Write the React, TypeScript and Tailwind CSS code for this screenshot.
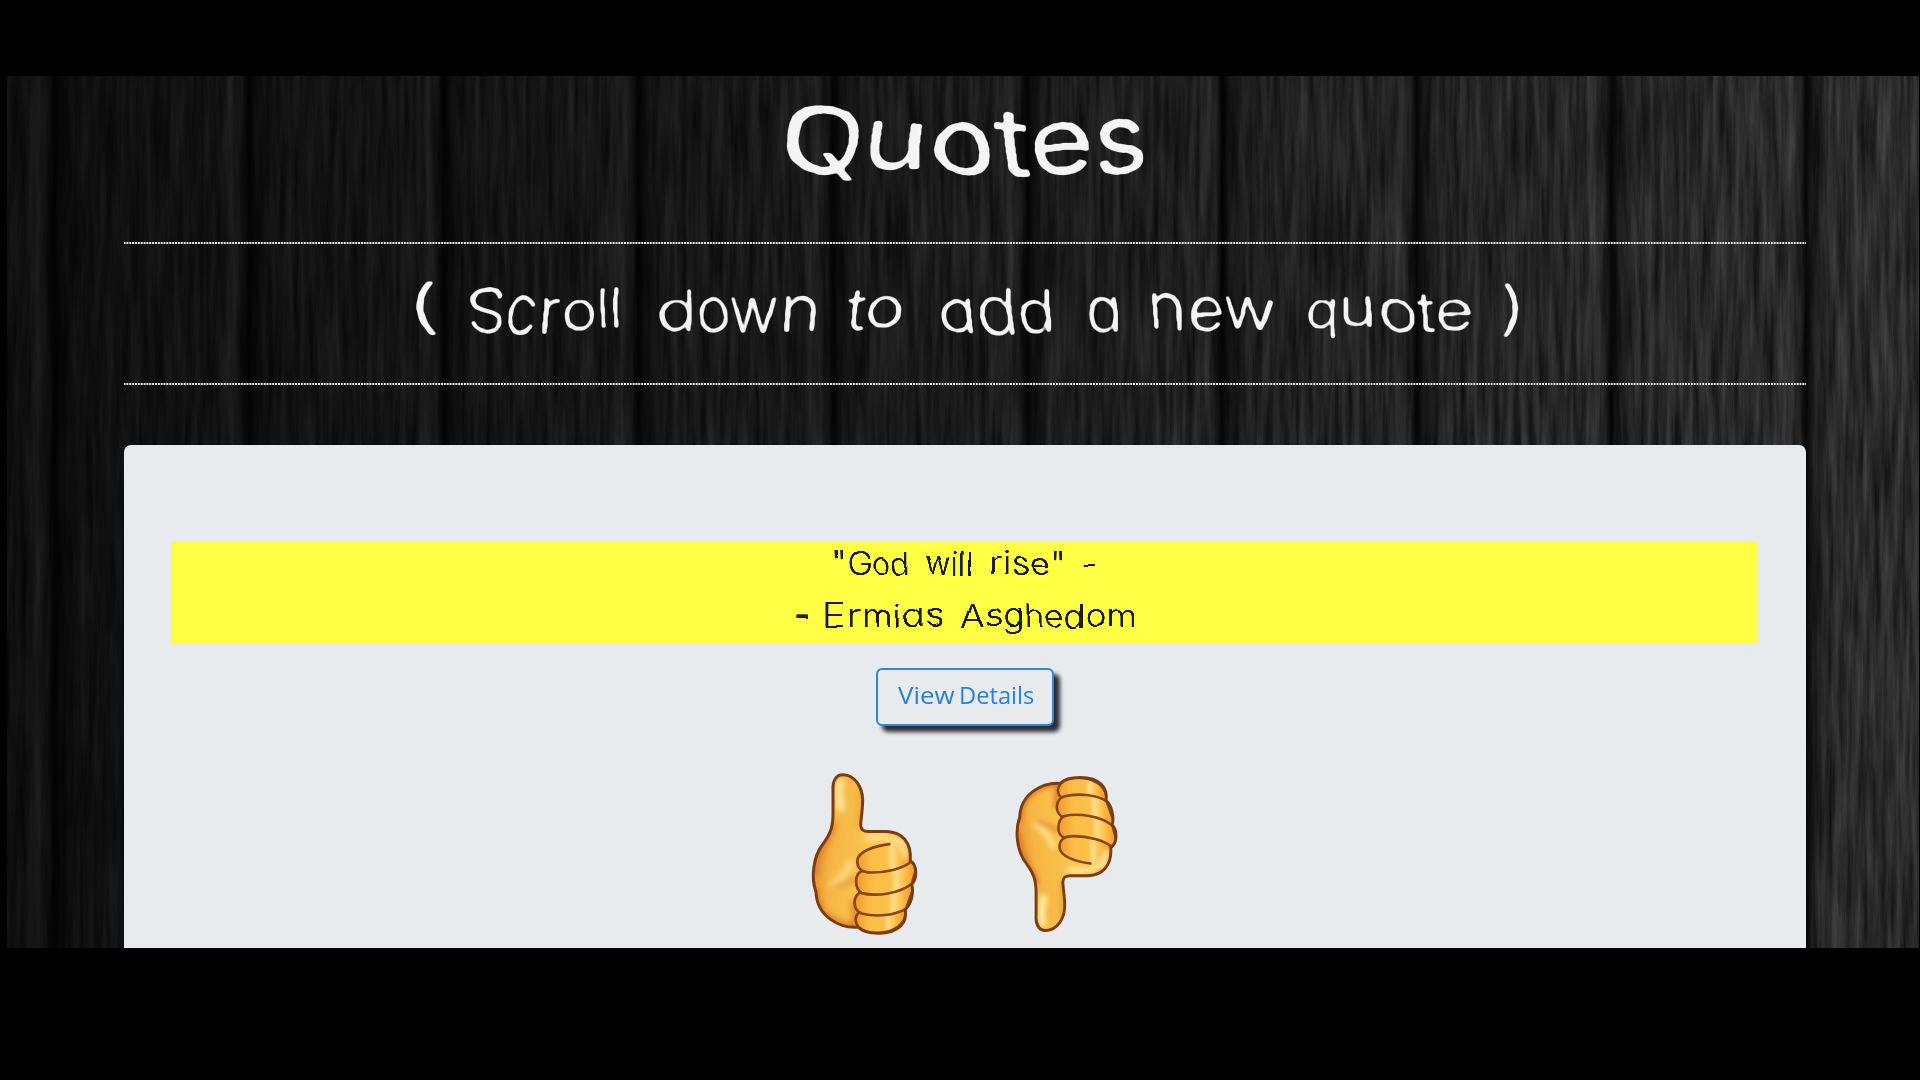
import { useLayoutEffect, useRef, useState } from "react";

type WordProps = { text: string; width: number; className?: string };

/* A word stretched sideways to a given width. */
function Word({ text, width, className = "" }: WordProps) {
  const ref = useRef<HTMLSpanElement>(null);
  const [scale, setScale] = useState(1);
  useLayoutEffect(() => {
    const el = ref.current;
    if (el) setScale(width / el.offsetWidth);
  }, [text, width]);
  return (
    <span className="block shrink-0 whitespace-nowrap" style={{ width }}>
      <span ref={ref} className={`inline-block origin-left ${className}`} style={{ transform: `scaleX(${scale})` }}>
        {text}
      </span>
    </span>
  );
}

const HAND = "font-['Inter','Liberation_Sans',sans-serif] [font-feature-settings:'cv11','ss03']";

/* Filters that bend the lettering and round its ends like a felt pen. */
function PenFilters() {
  return (
    <svg className="absolute h-0 w-0" aria-hidden="true">
      <filter id="pen-large" x="-5%" y="-20%" width="110%" height="140%" colorInterpolationFilters="sRGB">
        <feTurbulence type="fractalNoise" baseFrequency="0.015" numOctaves={1} seed={4} />
        <feDisplacementMap in="SourceGraphic" scale={19} xChannelSelector="R" yChannelSelector="G" />
        <feGaussianBlur stdDeviation="1.5" />
        <feComponentTransfer>
          <feFuncA type="linear" slope="3.4" intercept="-1.1" />
        </feComponentTransfer>
      </filter>
      <filter id="pen-small" x="-5%" y="-20%" width="110%" height="140%" colorInterpolationFilters="sRGB">
        <feTurbulence type="fractalNoise" baseFrequency="0.025" numOctaves={1} seed={7} />
        <feDisplacementMap in="SourceGraphic" scale={7} xChannelSelector="R" yChannelSelector="G" />
        <feGaussianBlur stdDeviation="0.6" />
        <feComponentTransfer>
          <feFuncA type="linear" slope="2.2" intercept="-0.3" />
        </feComponentTransfer>
      </filter>
    </svg>
  );
}

function Wood() {
  return (
    <div className="absolute inset-0 bg-black">
      <svg className="absolute inset-0 h-full w-full" aria-hidden="true">
        <filter id="grain" x="0" y="0" width="100%" height="100%" colorInterpolationFilters="sRGB">
          <feTurbulence type="fractalNoise" baseFrequency="0.15 0.009" numOctaves={5} seed={11} />
          <feColorMatrix values="0.27 0 0 0 0.035  0.27 0 0 0 0.035  0.27 0 0 0 0.035  0 0 0 0 1" />
        </filter>
        <rect width="100%" height="100%" filter="url(#grain)" />
      </svg>
      <div className="absolute inset-0 bg-[linear-gradient(90deg,rgba(0,0,0,.66)_0%,rgba(0,0,0,.54)_25%,rgba(0,0,0,.4)_50%,rgba(0,0,0,.2)_75%,rgba(0,0,0,0)_100%)]" />
      <div className="absolute inset-0 left-[-147px] bg-[repeating-linear-gradient(90deg,rgba(0,0,0,.85)_0px,rgba(0,0,0,.4)_7px,transparent_24px,transparent_165px,rgba(255,255,255,.04)_178px,rgba(0,0,0,.15)_188px,rgba(0,0,0,.85)_194.6px)]" />
    </div>
  );
}

function Rule() {
  return (
    <hr className="h-[2px] border-0 bg-[repeating-linear-gradient(90deg,#e4e4e4_0px,#e4e4e4_1px,#333_1.9px,#333_2px,#e4e4e4_2.86px)]" />
  );
}

function Thumb({ id, className }: { id: string; className: string }) {
  const outline =
    "M190,74 C225,76 247,110 248,150 C248,180 243,200 242,225 C243,240 250,244 265,244 L320,244 C365,246 395,275 391,332 C412,345 412,385 395,402 C402,425 395,460 376,478 C382,515 360,549 295,549 C265,549 245,542 235,531 C180,535 110,500 108,425 C93,385 98,320 130,280 C152,250 159,230 159,190 L159,120 C157,90 170,73 190,74Z";
  return (
    <svg viewBox="90 60 330 500" className={className} aria-hidden="true">
      <defs>
        <linearGradient id={`${id}-skin`} x1="0" x2="1" y1="0.3" y2="0.5">
          <stop offset="0" stopColor="#e58a2c" />
          <stop offset="0.22" stopColor="#f6b544" />
          <stop offset="0.6" stopColor="#fcc74f" />
          <stop offset="1" stopColor="#f9b43d" />
        </linearGradient>
        <linearGradient id={`${id}-finger`} x1="0" x2="1">
          <stop offset="0" stopColor="#ef9a2e" />
          <stop offset="0.25" stopColor="#fbbd45" />
          <stop offset="0.55" stopColor="#fbc04a" />
          <stop offset="0.64" stopColor="#ffdc86" />
          <stop offset="0.8" stopColor="#fbbb43" />
          <stop offset="1" stopColor="#e98f2c" />
        </linearGradient>
        <filter id={`${id}-soft`} x="-50%" y="-50%" width="200%" height="200%">
          <feGaussianBlur stdDeviation="9" />
        </filter>
        <clipPath id={`${id}-clip`}>
          <path d={outline} />
        </clipPath>
      </defs>
      <path d={outline} fill={`url(#${id}-skin)`} />
      <g clipPath={`url(#${id}-clip)`}>
        <g filter={`url(#${id}-soft)`} fill="none" strokeLinecap="round">
          <path d="M180,95 C172,120 178,150 182,175" stroke="#fff0a8" strokeWidth="22" />
          <path d="M262,262 C310,258 350,262 378,295" stroke="#ffe9a0" strokeWidth="16" />
          <path d="M212,335 C202,365 185,385 160,402" stroke="#ffe08a" strokeWidth="18" />
          <path d="M228,385 C205,395 190,402 165,408" stroke="#d97b25" strokeWidth="9" />
          <path d="M105,420 C110,500 170,530 235,531" stroke="#dc7a22" strokeWidth="20" />
          <path d="M158,225 C145,265 105,300 103,370" stroke="#d9772a" strokeWidth="18" />
          <path d="M240,120 L238,225" stroke="#eb9a35" strokeWidth="10" />
          <path d="M222,460 L226,525" stroke="#dc7a22" strokeWidth="16" />
        </g>
        <g fill={`url(#${id}-finger)`} stroke="#8a4513" strokeWidth="8" strokeLinejoin="round">
          <path d="M236,488 C222,500 226,520 236,531 C260,560 380,560 380,474 Z" />
          <path d="M238,428 C216,445 220,480 245,490 C290,502 345,495 378,476 L405,400 Z" />
          <path d="M243,364 C222,375 224,415 245,429 C290,440 360,430 396,400 L415,330 Z" />
        </g>
        <path
          d="M328,282 C280,288 235,305 232,330 C230,355 245,367 275,367 C320,367 370,355 393,335 C396,300 380,270 328,282Z"
          fill={`url(#${id}-finger)`}
        />
        <path d="M355,275 C370,290 380,300 376,325" fill="none" stroke="#ffe9a0" strokeWidth="18" filter={`url(#${id}-soft)`} />
      </g>
      <path
        d="M328,282 C280,288 235,305 232,330 C230,355 245,367 275,367 C320,367 370,355 393,335"
        fill="none"
        stroke="#8a4513"
        strokeWidth="8"
        strokeLinecap="round"
      />
      <path d={outline} fill="none" stroke="#7a3c12" strokeWidth="9" strokeLinejoin="round" />
    </svg>
  );
}

const SUBTITLE: [string, number, string][] = [
  ["(", 36, ""],
  ["Scroll", 162, "ml-[25px]"],
  ["down", 162, "ml-[29px]"],
  ["to", 62, "ml-[28px]"],
  ["add", 118, "ml-[29px]"],
  ["a", 38, "ml-[29px]"],
  ["new", 123, "ml-[29px]"],
  ["quote", 169, "ml-[29px]"],
  [")", 30, "ml-[25px]"],
];

export default function App() {
  return (
    <div className="h-[1080px] w-[1920px] overflow-hidden bg-black pt-[76px]">
      <PenFilters />
      <main className="relative isolate ml-[7px] h-[872px] w-[1912px] overflow-hidden">
        <Wood />
        <div className="relative ml-[117px] w-[1682px]">
          <header className={`text-[#f4f4f4] ${HAND}`}>
            <h1 className="flex h-[166px] justify-center pt-[9px] text-[92px] leading-[110px] [filter:url(#pen-large)]">
              <Word text="Quotes" width={368} />
            </h1>
            <Rule />
            <h2 className="flex h-[139px] justify-center pt-[30px] text-[60px] font-[350] leading-[70px] [filter:url(#pen-large)]">
              {SUBTITLE.map(([text, width, gap]) => (
                <div key={text} className={gap}>
                  <Word text={text} width={width} />
                </div>
              ))}
            </h2>
            <Rule />
          </header>

          <section className="mt-[60px] h-[540px] rounded-t-[7px] bg-[#e7ebee] px-[48px] pt-[97px]">
            <blockquote className={`h-[102px] bg-[#ffff45] font-[350] text-[#1c1c10] ${HAND}`}>
              <p className="flex h-[51px] justify-center pt-[2px] text-[32px] leading-[40px] [filter:url(#pen-small)]">
                <Word text={'"God'} width={78} />
                <span className="w-[15px]" />
                <Word text="will" width={47} />
                <span className="w-[15px]" />
                <Word text={'rise"'} width={79} />
                <span className="w-[14px]" />
                <Word text="-" width={16} />
              </p>
              <p className="flex h-[51px] justify-center pt-[2px] text-[33px] leading-[40px] [filter:url(#pen-small)]">
                <Word text="-" width={17} className="font-semibold" />
                <span className="w-[13px]" />
                <Word text="Ermias" width={121} />
                <span className="w-[16px]" />
                <Word text="Asghedom" width={176} />
              </p>
            </blockquote>
            <div className="mt-[24px] flex justify-center">
              <button className="flex h-[58px] w-[178px] justify-center rounded-[6px] border-2 border-[#2f86db] bg-[#e7ebee] pt-[7px] font-['Open_Sans','Liberation_Sans',sans-serif] text-[24px] leading-[36px] text-[#2a7fd6] shadow-[6px_6px_4px_#2b2f36]">
                <Word text="View" width={56} />
                <span className="w-[7px]" />
                <Word text="Details" width={75} />
              </button>
            </div>
            <div className="mt-[44px] flex items-start pl-[638px]">
              <Thumb id="up" className="h-[167px] w-[110px]" />
              <Thumb id="down" className="ml-[93px] mt-[4px] h-[161px] w-[108px] -scale-y-100" />
            </div>
          </section>
        </div>
      </main>
    </div>
  );
}
